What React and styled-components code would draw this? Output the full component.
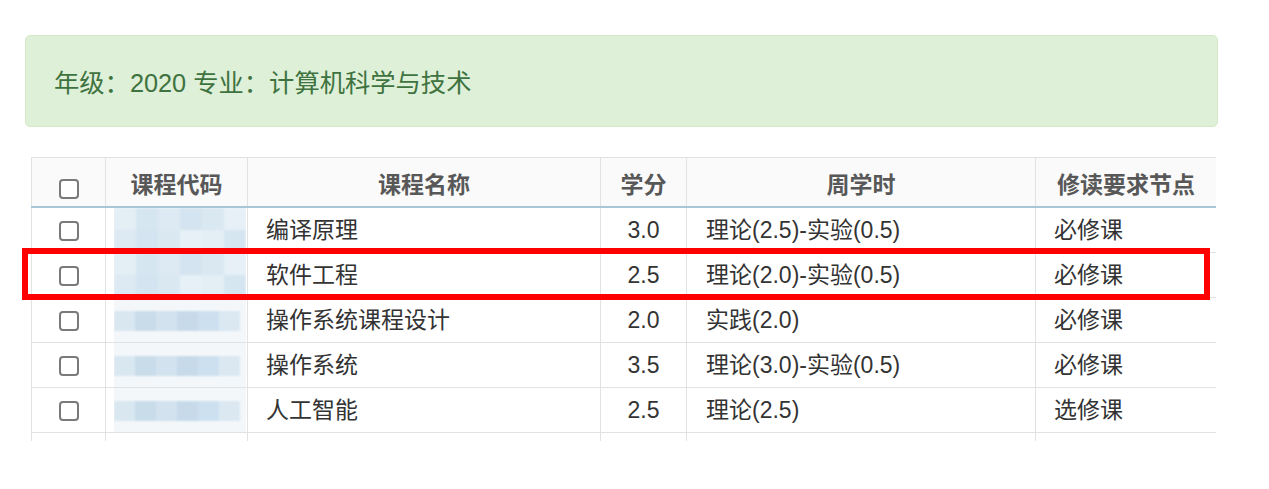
import React from 'react';
import styled, { createGlobalStyle } from 'styled-components';

const GlobalStyle = createGlobalStyle`
  body {
    margin: 0;
    background: #fff;
    font-family: "Liberation Sans", "Noto Sans CJK SC", sans-serif;
  }
`;

const Page = styled.div`
  width: 1193px;
  padding: 35px 0 0 25px;
`;

const Banner = styled.div`
  box-sizing: border-box;
  height: 92px;
  display: flex;
  align-items: center;
  padding-left: 28px;
  background: #dff0d8;
  border: 1px solid #d6e9c6;
  border-radius: 5px;
  color: #3e7340;
  font-size: 25.3px;
`;

const TableArea = styled.div`
  position: relative;
  margin: 30px 0 0 6px;
  width: 1185px;
`;

const TableClip = styled.div`
  height: 284px;
  overflow: hidden;
`;

const Table = styled.table`
  width: 1185px;
  border-collapse: collapse;
  table-layout: fixed;
  font-size: 23px;
  line-height: 28px;
  color: #333;
`;

const HeadCell = styled.th`
  height: 49px;
  padding: 13px 0 6px;
  box-sizing: border-box;
  background: #fafafa;
  border: 1px solid #e2e2e2;
  border-bottom: 2px solid #a9c6d6;
  color: #585858;
  font-weight: bold;
  text-align: center;
  vertical-align: middle;
`;

const Cell = styled.td`
  height: 44px;
  padding: 0 ${({ $pad }) => $pad || 0}px;
  border: 1px solid #e2e2e2;
  text-align: ${({ $align }) => $align || 'left'};
  vertical-align: middle;
  white-space: nowrap;
`;

const CodeCell = styled.td`
  height: 44px;
  padding: 0 0 0 8px;
  border: 1px solid #e2e2e2;
  vertical-align: middle;
`;

const Check = styled.span`
  display: inline-block;
  box-sizing: border-box;
  width: 20px;
  height: 20px;
  border: 2px solid #7a7a7a;
  border-radius: 4px;
  background: #fff;
  vertical-align: middle;
  margin-top: ${({ $head }) => ($head ? 4 : 0)}px;
`;

const Highlight = styled.div`
  position: absolute;
  left: -9px;
  top: 91px;
  width: 1188px;
  height: 52px;
  box-sizing: border-box;
  border: 6px solid #ff0000;
  pointer-events: none;
`;

const blues = ['#d9e7f1', '#c9dcea', '#d2e2ee', '#c6daea', '#cde0ef', '#dbe8f2'];
const soft = ['#e3eef5', '#d6e6f1', '#dde9f3', '#d4e4f0', '#dae8f2', '#e6f0f6'];

const Mosaic = ({ full }) => (
  <svg width="132" height="44" viewBox="0 0 132 44" style={{ display: 'block' }}>
    <defs>
      <filter id="soften" x="-5%" y="-5%" width="110%" height="110%">
        <feGaussianBlur stdDeviation="0.8" />
      </filter>
    </defs>
    <rect x="0" y="0" width="132" height="44" fill="#f3f7fa" />
    <g filter="url(#soften)">
      {full
        ? [0, 1].map((r) =>
            soft.map((c, i) => (
              <rect
                key={`${r}-${i}`}
                x={i * 22}
                y={r * 22}
                width="22"
                height="22"
                fill={r === 0 ? c : soft[(i + 2) % 6]}
              />
            ))
          )
        : blues.map((c, i) => (
            <rect key={i} x={i * 21} y="13" width="21" height="20" fill={c} />
          ))}
    </g>
  </svg>
);

const rows = [
  { name: '编译原理', credit: '3.0', hours: '理论(2.5)-实验(0.5)', req: '必修课', full: true },
  { name: '软件工程', credit: '2.5', hours: '理论(2.0)-实验(0.5)', req: '必修课', full: true },
  { name: '操作系统课程设计', credit: '2.0', hours: '实践(2.0)', req: '必修课' },
  { name: '操作系统', credit: '3.5', hours: '理论(3.0)-实验(0.5)', req: '必修课' },
  { name: '人工智能', credit: '2.5', hours: '理论(2.5)', req: '选修课' },
];

const App = () => (
  <Page>
    <GlobalStyle />
    <Banner>年级：2020 专业：计算机科学与技术</Banner>
    <TableArea>
      <TableClip>
        <Table>
          <colgroup>
            <col style={{ width: 74 }} />
            <col style={{ width: 142 }} />
            <col style={{ width: 353 }} />
            <col style={{ width: 86 }} />
            <col style={{ width: 349 }} />
            <col style={{ width: 181 }} />
          </colgroup>
          <thead>
            <tr>
              <HeadCell><Check $head /></HeadCell>
              <HeadCell>课程代码</HeadCell>
              <HeadCell>课程名称</HeadCell>
              <HeadCell>学分</HeadCell>
              <HeadCell>周学时</HeadCell>
              <HeadCell>修读要求节点</HeadCell>
            </tr>
          </thead>
          <tbody>
            {rows.map((row) => (
              <tr key={row.name}>
                <Cell $align="center"><Check /></Cell>
                <CodeCell><Mosaic full={row.full} /></CodeCell>
                <Cell $pad={18}>{row.name}</Cell>
                <Cell $align="center">{row.credit}</Cell>
                <Cell $pad={19}>{row.hours}</Cell>
                <Cell $pad={18}>{row.req}</Cell>
              </tr>
            ))}
            <tr>
              <Cell />
              <Cell />
              <Cell />
              <Cell />
              <Cell />
              <Cell />
            </tr>
          </tbody>
        </Table>
      </TableClip>
      <Highlight />
    </TableArea>
  </Page>
);

export default App;
